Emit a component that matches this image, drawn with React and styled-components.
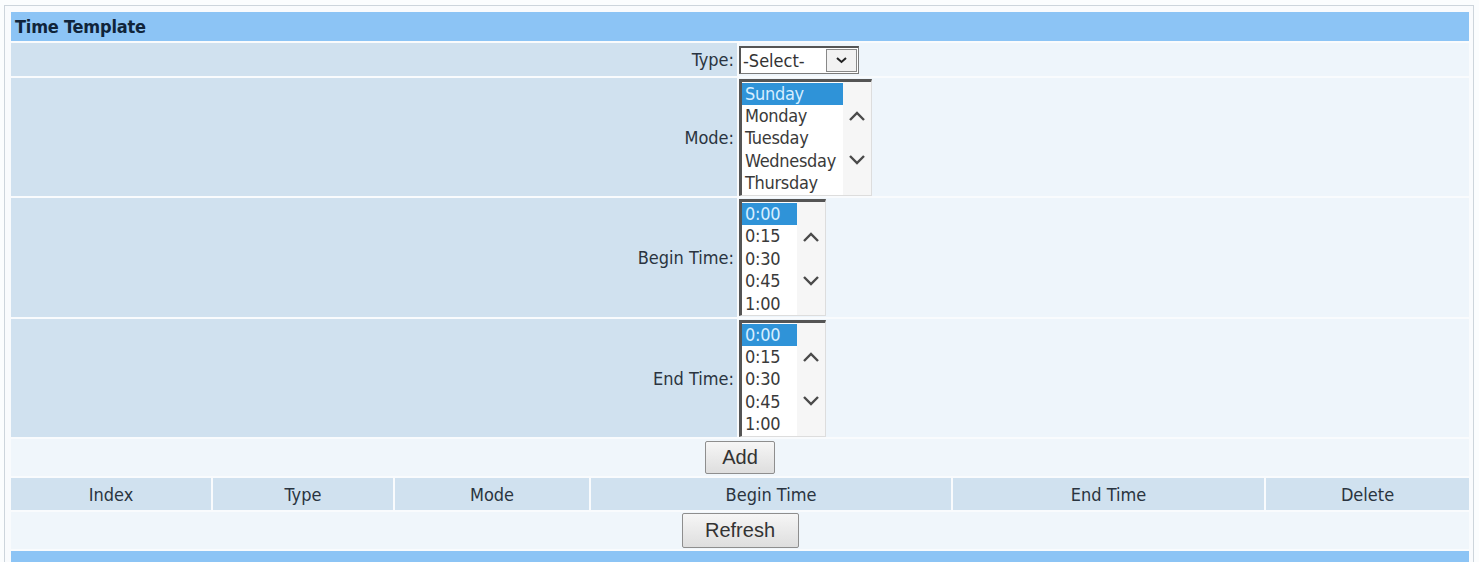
import React from 'react'
import styled, { createGlobalStyle } from 'styled-components'

const GlobalStyle = createGlobalStyle`
  html, body {
    margin: 0;
    padding: 0;
    background: #fbfdfe;
    font-family: "DejaVu Sans Condensed", "DejaVu Sans", Tahoma, sans-serif;
    color: #333;
  }
`

const Frame = styled.div`
  margin: 5px 5px 0 4px;
  border: 1px solid #cdd5dc;
  border-bottom: none;
  padding: 6px 4px 0 6px;
  background: #f9fbfd;
  display: flex;
  flex-direction: column;
  gap: 2px;
`

const TitleBar = styled.div`
  height: 29px;
  background: #8cc4f5;
  display: flex;
  align-items: center;
  padding-left: 4px;
  font-weight: bold;
  font-size: 18px;
  letter-spacing: -0.2px;
  color: #10243a;
`

const FormRow = styled.div`
  display: grid;
  grid-template-columns: 726px 1fr;
  gap: 2px;
  height: ${p => p.h}px;
`

const LabelCell = styled.div`
  background: #d0e1ef;
  display: flex;
  align-items: center;
  justify-content: flex-end;
  padding-right: 3px;
  font-size: 18px;
  color: #2a3440;
`

const FieldCell = styled.div`
  background: #eef5fb;
  display: flex;
  align-items: center;
`

const Dropdown = styled.div`
  width: 120px;
  height: 28px;
  box-sizing: border-box;
  border: 1px solid #7a7a7a;
  border-left: 2px solid #555;
  border-top: 2px solid #555;
  background: #fff;
  display: flex;
  align-items: center;
  justify-content: space-between;
  font-size: 18px;
  color: #333;
  padding-left: 2px;
`

const DropArrow = styled.span`
  width: 31px;
  height: 23px;
  box-sizing: border-box;
  border: 1px solid #888;
  background: #f2f2f2;
  display: flex;
  align-items: center;
  justify-content: center;
  margin-right: 1px;
`

const ListBox = styled.div`
  width: ${p => p.w}px;
  height: 117px;
  box-sizing: border-box;
  border-top: 3px solid #555;
  border-left: 3px solid #555;
  border-right: 1px solid #ddd;
  border-bottom: 1px solid #ddd;
  background: #fff;
  display: flex;
`

const Options = styled.div`
  flex: 1;
  display: flex;
  flex-direction: column;
  padding-top: 1px;
`

const Option = styled.div`
  height: 22.4px;
  line-height: 22px;
  font-size: 18px;
  letter-spacing: -0.3px;
  padding-left: 3px;
  color: ${p => (p.selected ? '#d6eeff' : '#3a3a3a')};
  background: ${p => (p.selected ? '#2f93d8' : 'transparent')};
`

const ScrollTrack = styled.div`
  width: 28px;
  background: #f6f6f6;
  display: flex;
  flex-direction: column;
  align-items: center;
  justify-content: center;
  gap: 32px;
`

const ActionRow = styled.div`
  height: ${p => p.h}px;
  background: #f0f6fb;
  display: flex;
  align-items: center;
  justify-content: center;
`

const Button = styled.button`
  width: ${p => p.w}px;
  height: ${p => p.h}px;
  border: 1px solid #8e8e8e;
  border-radius: 2px;
  background: linear-gradient(#f6f6f6, #dedede);
  font-family: "Liberation Sans", Arial, sans-serif;
  font-size: 20px;
  color: #333;
  padding: 0;
`

const ListHead = styled.div`
  display: grid;
  grid-template-columns: 200px 180px 194px 360px 311px 1fr;
  gap: 2px;
  height: 32px;
`

const HeadCell = styled.div`
  background: #d0e1ef;
  display: flex;
  align-items: center;
  justify-content: center;
  font-size: 18px;
  color: #2a3440;
`

const BottomBar = styled.div`
  height: 14px;
  background: #8cc4f5;
`

const Chevron = ({ up }) => (
  <svg width="18" height="11" viewBox="0 0 18 11">
    <polyline
      points={up ? '2,9 9,2 16,9' : '2,2 9,9 16,2'}
      fill="none"
      stroke="#4a4a4a"
      strokeWidth="2.4"
    />
  </svg>
)

const SmallChevron = () => (
  <svg width="13" height="8" viewBox="0 0 13 8">
    <polyline points="2,2 6.5,6 11,2" fill="none" stroke="#222" strokeWidth="2" />
  </svg>
)

const List = ({ items, w }) => (
  <ListBox w={w}>
    <Options>
      {items.map((it, i) => (
        <Option key={it} selected={i === 0}>{it}</Option>
      ))}
    </Options>
    <ScrollTrack>
      <Chevron up />
      <Chevron />
    </ScrollTrack>
  </ListBox>
)

const days = ['Sunday', 'Monday', 'Tuesday', 'Wednesday', 'Thursday']
const times = ['0:00', '0:15', '0:30', '0:45', '1:00']
const columns = ['Index', 'Type', 'Mode', 'Begin Time', 'End Time', 'Delete']

export default function App() {
  return (
    <>
      <GlobalStyle />
      <Frame>
        <TitleBar>Time Template</TitleBar>
        <FormRow h={33}>
          <LabelCell>Type:</LabelCell>
          <FieldCell>
            <Dropdown>
              -Select-
              <DropArrow><SmallChevron /></DropArrow>
            </Dropdown>
          </FieldCell>
        </FormRow>
        <FormRow h={118}>
          <LabelCell>Mode:</LabelCell>
          <FieldCell>
            <List items={days} w={133} />
          </FieldCell>
        </FormRow>
        <FormRow h={119}>
          <LabelCell>Begin Time:</LabelCell>
          <FieldCell>
            <List items={times} w={87} />
          </FieldCell>
        </FormRow>
        <FormRow h={118}>
          <LabelCell>End Time:</LabelCell>
          <FieldCell>
            <List items={times} w={87} />
          </FieldCell>
        </FormRow>
        <ActionRow h={37}>
          <Button w={70} h={33}>Add</Button>
        </ActionRow>
        <ListHead>
          {columns.map(c => <HeadCell key={c}>{c}</HeadCell>)}
        </ListHead>
        <ActionRow h={37}>
          <Button w={117} h={35}>Refresh</Button>
        </ActionRow>
        <BottomBar />
      </Frame>
    </>
  )
}
